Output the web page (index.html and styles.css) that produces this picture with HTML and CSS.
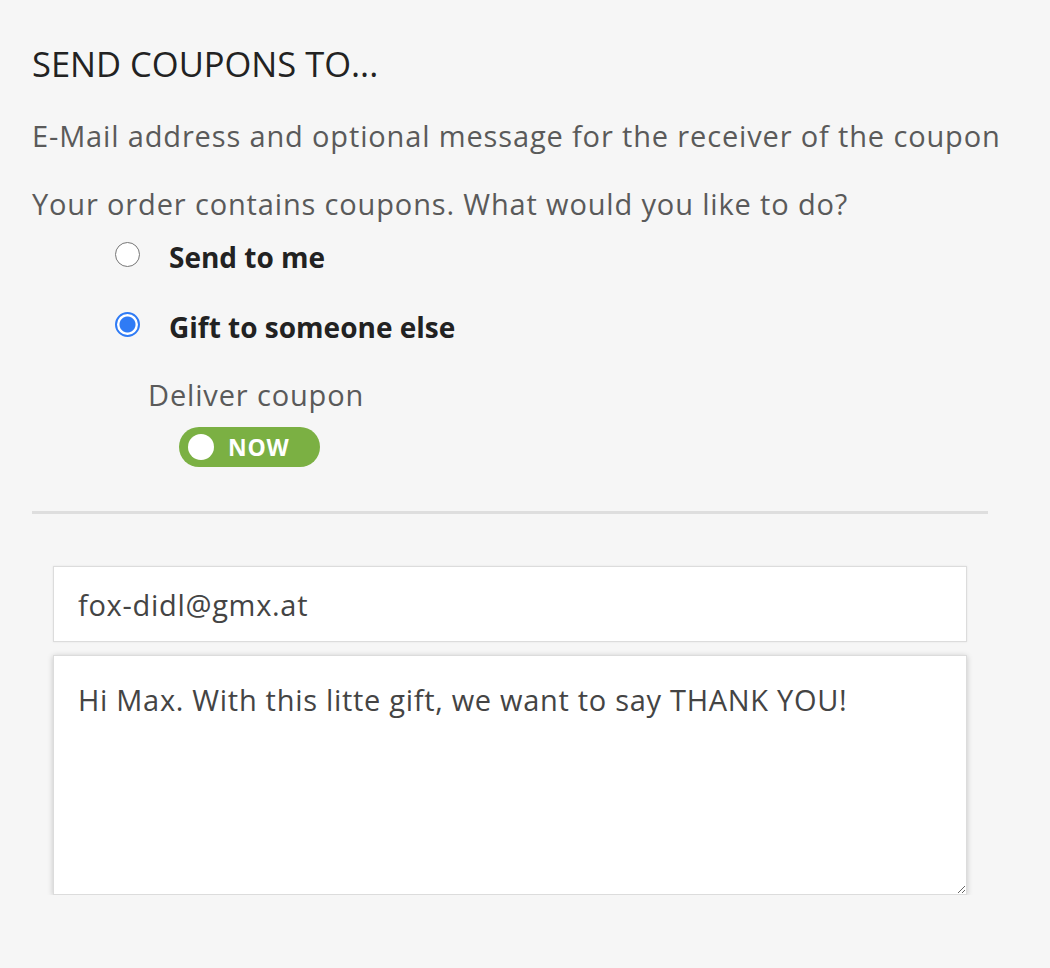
FILE: index.html
```html
<!DOCTYPE html>
<html lang="en">
<head>
<meta charset="utf-8">
<title>Send coupons</title>
<link rel="stylesheet" href="styles.css">
</head>
<body>
<div class="wrap">
  <h2 class="title">SEND COUPONS TO...</h2>
  <p class="desc">E-Mail address and optional message for the receiver of the coupon</p>
  <p class="question">Your order contains coupons. What would you like to do?</p>
  <div class="options">
    <label class="option">
      <span class="radio"></span>
      <span class="option-label">Send to me</span>
    </label>
    <label class="option">
      <span class="radio checked"></span>
      <span class="option-label">Gift to someone else</span>
    </label>
  </div>
  <p class="deliver">Deliver coupon</p>
  <div class="toggle">
    <span class="knob"></span>
    <span class="toggle-text">NOW</span>
  </div>
  <hr class="divider">
  <div class="fields">
    <input class="email" type="text" value="fox-didl@gmx.at">
    <textarea class="message">Hi Max. With this litte gift, we want to say THANK YOU!</textarea>
  </div>
</div>
</body>
</html>
```

FILE: styles.css
```css
html, body {
  margin: 0;
  padding: 0;
  background: #f6f6f6;
}

body {
  font-family: "Open Sans", "Noto Sans", sans-serif;
  color: #555;
}

.wrap {
  padding: 44px 0 0 32px;
  width: 956px;
}

.title {
  margin: 0;
  font-size: 34.5px;
  line-height: 40px;
  font-weight: 400;
  color: #222;
}

.desc,
.question,
.deliver {
  margin: 0;
  font-size: 29px;
  line-height: 36px;
  letter-spacing: 0.85px;
  color: #5a5a5a;
  white-space: nowrap;
}

.desc {
  margin-top: 34px;
}

.question {
  margin-top: 32px;
}

.options {
  margin-left: 83px;
  display: flex;
  flex-direction: column;
}

.option {
  display: flex;
  align-items: center;
  height: 70px;
  gap: 29px;
}

.radio {
  box-sizing: border-box;
  width: 25px;
  height: 25px;
  border-radius: 50%;
  border: 1.5px solid #767676;
  background: #fff;
  margin-bottom: 6px;
  flex: none;
}

.radio.checked {
  border: 2.5px solid #2f7bf5;
  background: radial-gradient(circle, #2f7bf5 0 7.5px, #fff 8.5px);
}

.option-label {
  font-size: 28px;
  line-height: 36px;
  font-weight: 700;
  color: #222;
}

.deliver {
  margin-top: 15px;
  margin-left: 116px;
}

.toggle {
  margin-top: 14px;
  margin-left: 147px;
  width: 141px;
  height: 40px;
  border-radius: 20px;
  background: #7bb043;
  display: flex;
  align-items: center;
  gap: 14px;
  padding-left: 9px;
  box-sizing: border-box;
}

.knob {
  width: 26px;
  height: 26px;
  border-radius: 50%;
  background: #fff;
  flex: none;
}

.toggle-text {
  color: #fff;
  font-weight: 700;
  font-size: 23px;
  letter-spacing: 0.8px;
  line-height: 26px;
}

.divider {
  margin: 44px 0 0 0;
  border: 0;
  height: 3px;
  background: #dedede;
}

.fields {
  margin: 52px 0 0 21px;
  display: flex;
  flex-direction: column;
  gap: 13px;
  width: 914px;
}

.email,
.message {
  box-sizing: border-box;
  width: 914px;
  margin: 0;
  font-family: "Open Sans", "Noto Sans", sans-serif;
  font-size: 29px;
  letter-spacing: 0.7px;
  color: #444;
  background: #fff;
  border: 1px solid #dcdcdc;
  outline: none;
}

.email {
  height: 76px;
  padding: 0 24px;
  box-shadow: 0 0 2px rgba(0, 0, 0, 0.08);
}

.message {
  height: 240px;
  padding: 26px 24px;
  line-height: 36px;
  resize: both;
  box-shadow: 0 1px 6px rgba(0, 0, 0, 0.2);
}
```
